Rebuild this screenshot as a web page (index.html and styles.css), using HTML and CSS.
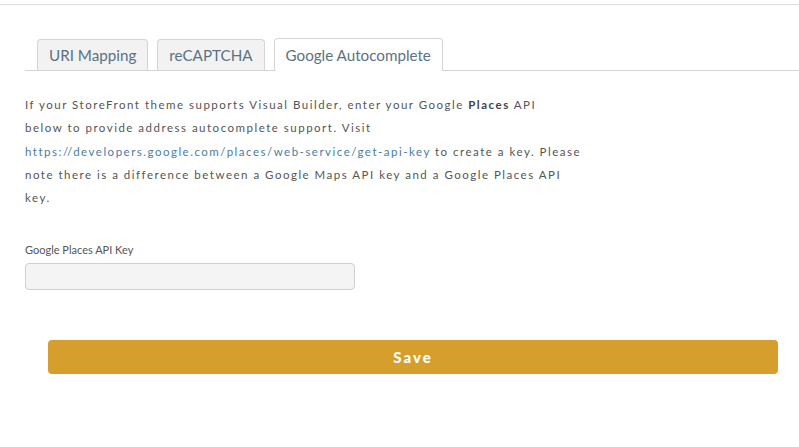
FILE: index.html
```html
<!DOCTYPE html>
<html lang="en">
<head>
  <meta charset="UTF-8">
  <title>Settings - Google Autocomplete</title>
  <link rel="stylesheet" href="styles.css">
</head>
<body>
  <div class="topbar"></div>

  <div class="panel">
    <ul class="tabs">
      <li class="tab">URI Mapping</li>
      <li class="tab">reCAPTCHA</li>
      <li class="tab active">Google Autocomplete</li>
    </ul>

    <div class="tab-body">
      <p class="intro">
        If your StoreFront theme supports Visual Builder, enter your Google <b>Places</b> API<br>
        below to provide address autocomplete support. Visit<br>
        <a href="#">https://developers.google.com/places/web-service/get-api-key</a> to create a key. Please<br>
        note there is a difference between a Google Maps API key and a Google Places API<br>
        key.
      </p>

      <label class="field-label" for="placesKey">Google Places API Key</label>
      <input type="text" id="placesKey" class="field-input">
    </div>

    <div class="actions">
      <button class="save-btn">Save</button>
    </div>
  </div>
</body>
</html>
```

FILE: styles.css
```css
body {
  margin: 0;
  background: #fff;
  font-family: Lato, 'Open Sans', sans-serif;
  color: #555;
}
.topbar {
  height: 4px;
  border-bottom: 1px solid #dcdcdc;
}
.panel {
  padding: 33px 0 0 25px;
}
.tabs {
  display: flex;
  list-style: none;
  margin: 0;
  padding: 0 0 0 12px;
  border-bottom: 1px solid #d4d4d4;
  gap: 9px;
  align-items: flex-end;
}
.tab {
  background: #f2f2f2;
  border: 1px solid #d4d4d4;
  border-bottom: none;
  border-radius: 4px 4px 0 0;
  padding: 0 11px;
  height: 30px;
  line-height: 30px;
  font-size: 15.2px;
  color: #5b7282;
}
.tab.active {
  background: #fff;
  height: 31px;
  line-height: 33px;
  margin-bottom: -1px;
  padding-bottom: 1px;
}
.tab-body {
  padding-top: 22px;
}
.intro {
  margin: 0;
  max-width: 620px;
  font-size: 11.5px;
  line-height: 23.3px;
  letter-spacing: 1.5px;
  color: #555;
}
.intro b {
  font-weight: bold;
  color: #444;
}
.intro a {
  color: #4a7c9e;
  text-decoration: none;
}
.field-label {
  display: block;
  margin-top: 34px;
  font-size: 11px;
  color: #555;
}
.field-input {
  display: block;
  margin-top: 7px;
  width: 330px;
  height: 27px;
  box-sizing: border-box;
  background: #f4f4f4;
  border: 1px solid #cfcfcf;
  border-radius: 4px;
}
.actions {
  padding: 50px 21px 0 23px;
}
.save-btn {
  display: block;
  width: 100%;
  height: 34px;
  background: #d69f2d;
  border: none;
  border-radius: 4px;
  color: #fff;
  font-family: Lato, sans-serif;
  font-weight: 900;
  font-size: 15px;
  letter-spacing: 2px;
}
```
